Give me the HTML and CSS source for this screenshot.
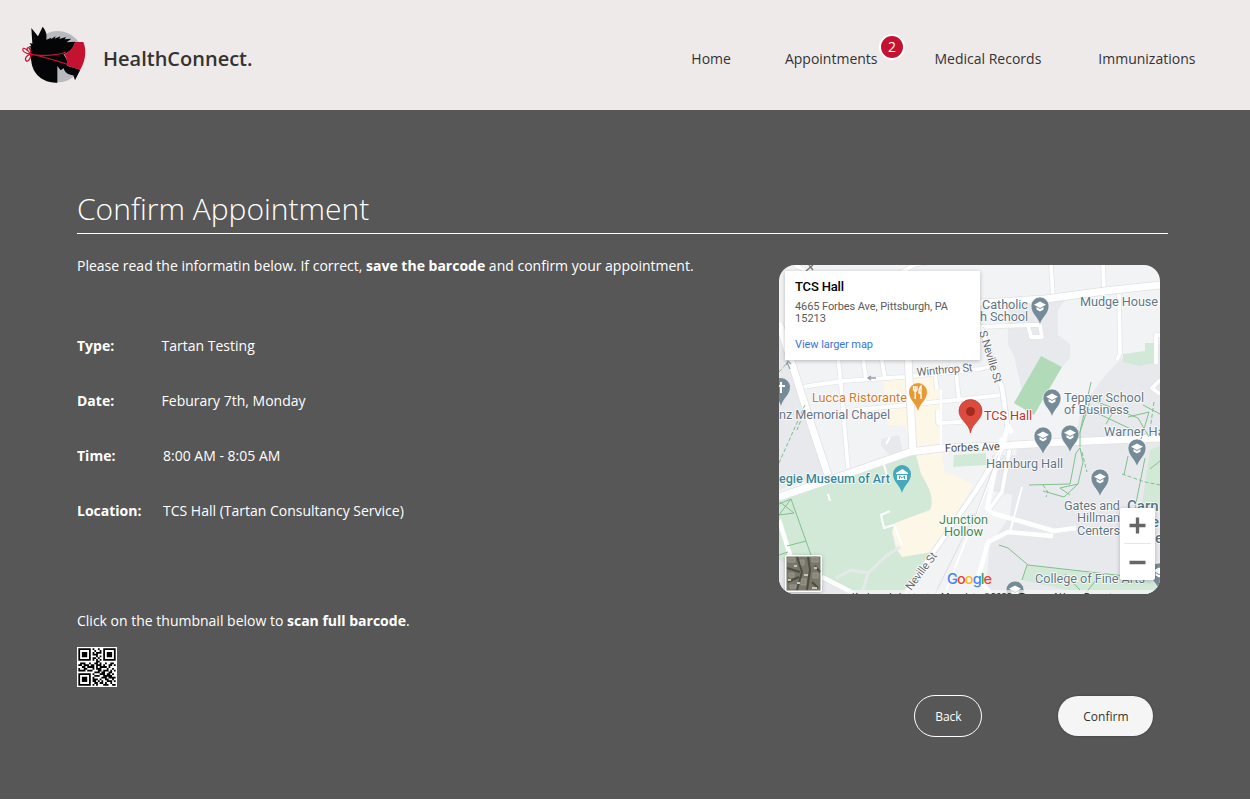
FILE: index.html
```html
<!DOCTYPE html>
<html lang="en">
<head>
<meta charset="utf-8">
<title>HealthConnect - Confirm Appointment</title>
<link rel="stylesheet" href="styles.css">
</head>
<body>
<header class="header">
  <a class="brand">
    <svg class="logo" viewBox="0 0 210 210" aria-hidden="true">
      <circle cx="113" cy="110" r="77" fill="#b9babf"/>
      <path d="M34 24 54 49 68 20C78 32 81 43 79 59L94 53 92 58 107 49 104 56 121 49 118 57 138 51 134 58 154 56 140 67 166 65C160 84 150 96 130 103C134 108 135 110 137 113C142 120 144 128 141 137L181 149 165 181 160 166C145 165 134 157 131 145L122 151 112 138V188C72 190 38 165 34 124L29 101 32 90 27 91 33 84 26 78 34 79 29 69 37 71Z" fill="#030506"/>
      <path d="M165 66H190C199 86 199 120 181 148C169 147 148 140 140 135C142 124 141 113 133 103C148 96 160 85 165 66Z" fill="#c41230"/>
      <path d="M33 103C55 108 110 108 138 96M33 103C70 108 120 125 182 146" fill="none" stroke="#c41230" stroke-width="4"/>
      <path d="M34 103C14 101 4 91 10 85C18 82 23 95 34 103C20 92 18 83 26 83C34 86 31 97 34 103C18 104 12 119 20 124C29 122 32 112 34 103" fill="none" stroke="#c41230" stroke-width="3.500"/>
    </svg>
    <span class="brand-name">HealthConnect.</span>
  </a>
  <nav class="nav">
    <a class="nav-home">Home</a>
    <a class="nav-appointments">Appointments<span class="badge">2</span></a>
    <a class="nav-records">Medical Records</a>
    <a class="nav-immunizations">Immunizations</a>
  </nav>
</header>
<main class="main">
  <h1 class="title">Confirm Appointment</h1>
  <div class="content">
    <section class="details">
      <p class="text">Please read the informatin below. If correct, <b>save the barcode</b> and confirm your appointment.</p>
      <dl class="fields">
        <div class="field"><dt>Type:</dt><dd>Tartan Testing</dd></div>
        <div class="field"><dt>Date:</dt><dd>Feburary 7th, Monday</dd></div>
        <div class="field field-wide"><dt>Time:</dt><dd>8:00 AM - 8:05 AM</dd></div>
        <div class="field field-wide"><dt>Location:</dt><dd>TCS Hall (Tartan Consultancy Service)</dd></div>
      </dl>
      <p class="text">Click on the thumbnail below to <b>scan full barcode</b>.</p>
      <svg class="qr" viewBox="-.75 -.75 22.5 22.5" aria-label="Barcode">
        <rect x="-.75" y="-.75" width="22.5" height="22.5" fill="#fff"/>
        <g fill="none" stroke="#000">
          <path d="M.5.5h6v6h-6zM14.5.5h6v6h-6zM.5 14.5h6v6h-6z"/>
          <path stroke-width="3" d="M2 3.5h3M16 3.5h3M2 17.5h3"/>
          <path d="M8 .5h1M11 .5h1M9 1.5h1M12 1.5h1M8 2.5h1M10 2.5h3M8 3.5h3M10 4.5h1M12 4.5h1M8 5.5h2M11 5.5h1M8 6.5h1M10 6.5h1M12 6.5h1M10 7.5h2M1 8.5h3M6 8.5h1M9 8.5h2M12 8.5h1M15 8.5h1M18 8.5h2M0 9.5h2M3 9.5h3M7 9.5h2M10 9.5h3M14 9.5h1M17 9.5h2M20 9.5h1M2 10.5h2M5 10.5h4M10 10.5h1M12 10.5h4M17 10.5h1M0 11.5h1M3 11.5h2M8 11.5h1M10 11.5h3M16 11.5h1M19 11.5h1M0 12.5h4M5 12.5h3M11 12.5h2M14 12.5h3M18 12.5h1M20 12.5h1M9 13.5h3M13 13.5h2M17 13.5h2M8 14.5h1M12 14.5h3M16 14.5h2M19 14.5h1M9 15.5h3M14 15.5h5M8 16.5h1M13 16.5h3M17 16.5h4M8 17.5h3M12 17.5h1M15 17.5h2M19 17.5h1M8 18.5h2M11 18.5h1M13 18.5h1M16 18.5h3M20 18.5h1M9 19.5h2M12 19.5h2M15 19.5h1M18 19.5h1M8 20.5h1M10 20.5h1M14 20.5h3M19 20.5h2"/>
        </g>
      </svg>
    </section>
    <aside class="side">
      <svg class="map" viewBox="779 265 381 329" role="img" aria-label="Map of TCS Hall">
        <defs>
          <g id="pin"><path d="M0 14C-2 6-9 3-9-5A9 9 0 0 1 9-5C9 3 2 6 0 14Z"/></g>
          <g id="school"><use href="#pin" fill="#768b98" stroke="#fff" stroke-width=".6"/><path d="M0-9.500 6-6.200 0-3-6-6.200ZM-3.500-4V-1.500L0 .5 3.500-1.500V-4L0-2Z" fill="#fff"/></g>
        </defs>
        <rect x="779" y="265" width="381" height="329" fill="#f1f3f5"/>
        <g fill="#e8e9ed">
          <path d="M1008 301 1065 300 1058 310V335L1070 344V358L1062 367 1041 356 1022 391 1014 356 1008 345Z"/>
          <path d="M1112 368 1122 358 1152 363 1160 342V594H985L990 545 1010 516 1017 446 1075 440 1081 410 1099 383Z"/>
          <path d="M779 330 827 474 779 490ZM779 560H820L850 594H779Z"/>
          <path d="M881 439 899 435 903 452 890 455 881 446ZM992 455H1017V496L993 491Z"/>
        </g>
        <path d="M883 380 932 375 941 389V425L942 455 945 472 960 478 974 485 934 551 903 560 890 525 925 510 914 455 905 426 888 425Z" fill="#fcf7e7"/>
        <path d="M779 500 910 455H916L921 474C931 490 934 500 930 510L895 523 892 532 896 549 902 557 932 552 905 594H850L779 560Z" fill="#d3e9d8"/>
        <path d="M954 455 986 453V465L953 467ZM1123 354 1145 351V343H1155V363L1139 366 1123 362ZM1027 565 1022 580 1085 594H1160V583L1120 576ZM1150 450 1160 446V510H1141Z" fill="#d3e9d8"/>
        <path d="M1041 356 1062 367 1034 415 1014 403Z" fill="#b1dab8"/>
        <g fill="none" stroke-linejoin="round">
          <path stroke="#dfe1e5" stroke-width="5" d="M802 387 842 381 903 377 980 369 995 365M855 410 908 405 965 399 1002 395M838 357 841 385 848 468M863 357 866 379M881 355 885 379M935 373 937 389M956 372 959 400M938 410V423L962 422M979 327 1028 325 1031 337H1042L1040 325H1028M1119 294 1120 353 1117 360M1051 265 1053 297M1103 265 1104 290M888 280 914 265 930 262M805 270 795 265M1010 447 1002 492 987 512M1160 335H1156V364M1160 380 1152 388 1160 394"/>
          <path stroke="#fff" stroke-width="3.800" d="M802 387 842 381 903 377 980 369 995 365M855 410 908 405 965 399 1002 395M838 357 841 385 848 468M863 357 866 379M881 355 885 379M935 373 937 389M956 372 959 400M938 410V423L962 422M979 327 1028 325 1031 337H1042L1040 325H1028M1119 294 1120 353 1117 360M1051 265 1053 297M1103 265 1104 290M888 280 914 265 930 262M805 270 795 265M1010 447 1002 492 987 512M1160 335H1156V364M1160 380 1152 388 1160 394"/>
          <path stroke="#dfe1e5" stroke-width="8.500" d="M779 497 847 474 910 452 942 448 998 446 1065 442 1160 438M779 323 812 427 828 475M908 357 913 452M980 303 1045 299 1105 291 1160 285"/>
          <path stroke="#dfe1e5" stroke-width="6" d="M981 328 1002 387 1008 430M1003 447 975 492 935 550 905 594"/>
          <path stroke="#fff" stroke-width="7" d="M779 497 847 474 910 452 942 448 998 446 1065 442 1160 438M779 323 812 427 828 475M908 357 913 452M980 303 1045 299 1105 291 1160 285"/>
          <path stroke="#fff" stroke-width="4.500" d="M981 328 1002 387 1008 430M1003 447 975 492 935 550 905 594M1002 438 987 508 992 513 1054 531 1076 528M1053 536 1008 532 988 542 978 578 991 594M779 520 791 558M822 577 855 594M1008 425 1003 445M1008 425 1012 433"/>
          <path stroke="#fff" stroke-width="2" d="M828 494 830 501M890 511 881 515 884 528 894 525 902 545M884 465 889 482M890 437 886 444M1022 487 1010 532M1004 445 960 555 945 594M941 390V447"/>
          <path stroke="#e6e9e9" stroke-width="3" d="M900 547 885 557 868 573 851 570 836 578M868 573 863 590"/>
          <path stroke="#dcdde0" d="M975 513 935 594M998 455 970 530"/>
          <path stroke="#7fc08c" d="M779 504 791 499 811 555M779 515 791 499M780 502 794 513 779 515M787 546 806 541M779 555 788 552M1080 447V432L1091 382M1085 397 1138 418 1149 437M1080 405 1135 431M1092 395 1078 438M1116 407 1106 424M1128 417 1149 412 1141 439M1160 414 1143 405M1029 485 1070 484 1076 453 1080 448 1083 462 1078 484 1064 497 1043 491M1078 484 1060 488 1070 495M999 545 1008 548 1028 565 1160 580M1128 456 1124 475M1145 458 1135 508M1150 469 1160 461M1022 580 1027 565M1065 574 1080 590M1100 575 1085 594"/>
          <path stroke="#7fc08c" stroke-dasharray="4 2" d="M779 463 805 405M779 372 788 362M805 410 797 430M1122 474 1145 482 1160 485M1154 402 1150 430M1082 452 1087 472M1043 485 1048 492 1046 497"/>
        </g>
        <g stroke="#99a0b4" stroke-width="1.300" fill="none"><path d="M876 378H868M871 376 868 378 871 380M790 369 787 362M786 365 788 361 791 364"/><path stroke="#777" d="M806 271 813 265M809 265 813 270"/></g>
        <use href="#school" x="1040" y="311"/><use href="#school" x="1052" y="403"/><use href="#school" x="1043" y="441"/><use href="#school" x="1070" y="439"/><use href="#school" x="1137" y="453"/><use href="#school" x="1100" y="483"/><use href="#school" x="1015" y="595"/><use href="#school" x="1159" y="577"/>
        <use href="#pin" x="781" y="392" fill="#768b98"/><path d="M781 382V393M777 386H785" stroke="#fff" stroke-width="2"/>
        <use href="#pin" x="918" y="397" fill="#e69a35"/><path d="M913.500 386V390Q915.500 393 917 390V386M915.200 386V399M921 399V386Q919 388 919 393H921" fill="none" stroke="#fff" stroke-width="1.300"/>
        <use href="#pin" x="902" y="479" fill="#45a9bd"/><path d="M896 473 902.500 469 908 473V474H896ZM897 475H907V480H897Z" fill="#fff"/><path d="M899.500 479V476L902 478 904.500 476V479" fill="none" stroke="#45a9bd"/>
        <path d="M970.500 433C969 423 959 420 959 411A11.500 11.500 0 0 1 982 411C982 420 972 423 970.500 433Z" fill="#dd4b3e" stroke="#b9382f" stroke-width=".7"/><circle cx="970.500" cy="411.500" r="4.500" fill="#a32a21"/>
        <g class="labels">
          <text x="982" y="309" textLength="46">Catholic</text><text x="980" y="321" textLength="48">h School</text>
          <text x="1080" y="306" textLength="78">Mudge House</text>
          <text x="1064" y="402" textLength="80">Tepper School</text><text x="1064" y="414" textLength="65">of Business</text>
          <text x="1104" y="436" textLength="67">Warner Hall</text>
          <text x="986" y="468" textLength="77">Hamburg Hall</text>
          <text x="1064" y="510" textLength="56">Gates and</text><text x="1077" y="522" textLength="43">Hillman</text><text x="1077" y="535" textLength="43">Centers</text>
          <text x="1035" y="583" textLength="110">College of Fine Arts</text>
          <text x="779" y="419" textLength="111">nz Memorial Chapel</text>
          <text class="orange" x="812" y="402" textLength="95">Lucca Ristorante</text>
          <text class="teal" x="779" y="483" textLength="111">egie Museum of Art</text>
          <text class="red" x="984" y="420" textLength="48">TCS Hall</text>
          <text class="green" x="939" y="524" textLength="49">Junction</text><text class="green" x="944" y="536" textLength="39">Hollow</text>
          <text class="campus" x="1127" y="511">Carn</text><text class="campus" x="1151" y="527">el</text><text class="campus" x="1155" y="543">e</text>
          <text class="road" x="917" y="376" textLength="56" transform="rotate(-5 917 376)">Winthrop St</text>
          <text class="road" x="979" y="332" textLength="54" transform="rotate(73 979 332)">S Neville St</text>
          <text class="road" x="911" y="591" textLength="44" transform="rotate(-53 911 591)">Neville St</text>
          <text class="road dark" x="945" y="452" textLength="55" transform="rotate(-2 945 452)">Forbes Ave</text>
        </g>
        <text class="google" x="947" y="584" textLength="45"><tspan fill="#4285f4">G</tspan><tspan fill="#ea4335">o</tspan><tspan fill="#fbbc05">o</tspan><tspan fill="#4285f4">g</tspan><tspan fill="#34a853">l</tspan><tspan fill="#ea4335">e</tspan></text>
        <rect x="848" y="590" width="312" height="4" fill="#f5f5f5" opacity=".7"/>
        <text class="legal" y="599.500"><tspan x="852">Keyboard shortcuts</tspan><tspan x="941">Map data ©2022</tspan><tspan x="1019">Terms of Use</tspan><tspan x="1084">Report</tspan></text>
        <g class="raised">
          <path d="M785 271H980V360H785Z" fill="#fff"/>
          <rect x="1120" y="508" width="35" height="72" rx="2" fill="#fff"/>
          <rect x="785" y="555" width="37" height="37" rx="2" fill="#fff"/>
        </g>
        <text class="place" x="795" y="291" textLength="49">TCS Hall</text>
        <text class="address" x="795" y="310" textLength="153">4665 Forbes Ave, Pittsburgh, PA</text><text class="address" x="795" y="322" textLength="31">15213</text>
        <text class="link" x="795" y="348" textLength="78">View larger map</text>
        <path d="M1124 543.500H1151" stroke="#e6e6e6"/><path d="M1129.500 525.500H1145.500M1137.500 517.500V533.500M1129.500 562.500H1145.500" stroke="#666" stroke-width="3.300"/>
        <rect x="786.500" y="556.500" width="34" height="34" fill="#77766a"/>
        <g class="aerial" fill="none"><path d="M788 558h7v4h-7zM800 560h4v5h-4zM812 557h6v5h-6zM789 573h5v4h-5zM801 579h5v6h-5zM813 573h5v5h-5zM790 585h6v3h-6z" stroke="#9b968b" fill="#8a8778"/><path d="M797 557 802 572 797 590M808 557 810 570 807 590M787 568 800 572M788 582 799 577M815 566 820 572M812 582 818 588" stroke="#4b4d40" stroke-width="2"/><path d="M794 566h3M804 575h4M814 568h3M788 580h3M812 588h5M797 583h3" stroke="#cac5b8" stroke-width="2"/></g>
      </svg>
      <div class="actions">
        <button class="button button-outline">Back</button>
        <button class="button button-solid">Confirm</button>
      </div>
    </aside>
  </div>
</main>
</body>
</html>
```
FILE: styles.css
```css
* { box-sizing: border-box; }
body { margin: 0; background: #fff; font-family: "Open Sans", sans-serif; font-size: 14px; line-height: 20px; }
.header { height: 110px; background: #eeeae9; color: #333; display: flex; justify-content: space-between; align-items: flex-start; padding: 20px 54.6px 0 20px; }
.brand { display: flex; align-items: flex-start; gap: 13px; }
.logo { width: 70px; height: 70px; }
.brand-name { font-size: 20px; font-weight: 600; line-height: 28px; padding-top: 25px; }
.nav { display: flex; gap: 57px; padding-top: 29px; }
.nav-home { margin-right: -3px; }
.nav-appointments { position: relative; }
.badge { position: absolute; left: 94px; top: -15px; width: 26px; height: 26px; border: 2px solid #fff; border-radius: 50%; background: #c41230; color: #fff; text-align: center; line-height: 22px; }
.main { height: 689px; background: #575757; color: #fff; padding: 76px 82px 0 77px; }
.title { margin: 0; height: 48px; border-bottom: 1px solid #fff; font-size: 30px; font-weight: 300; line-height: 45px; }
.content { display: flex; justify-content: space-between; }
.details { padding-top: 22px; }
.text { margin: 0; }
.fields { margin: 60px 0 90px; display: grid; gap: 35px; }
.field { display: grid; grid-template-columns: 84.6px auto; }
.field-wide { grid-template-columns: 86px auto; }
.field dt { font-weight: 700; }
.field dd { margin: 0; }
.qr { display: block; width: 40px; height: 40px; margin-top: 16px; }
.side { width: 381px; margin: 31px 8px 0 0; }
.map { display: block; width: 381px; height: 329px; border-radius: 16px; font-family: Roboto, sans-serif; }
.labels { font-size: 12.7px; fill: #5f7685; paint-order: stroke; stroke: #fff; stroke-width: 1.5px; stroke-linejoin: round; }
.orange { fill: #d07a2d; }
.teal { fill: #3a8799; font-weight: 500; }
.red { fill: #b9342b; }
.green { fill: #3d8b50; }
.campus { font-size: 15px; font-weight: 500; fill: #557587; }
.road { font-size: 11.3px; fill: #686c70; }
.dark { fill: #484b4e; }
.google { font-family: Inter, sans-serif; font-size: 14.5px; font-weight: 500; }
.legal { font-size: 9.5px; fill: #222; }
.raised { filter: drop-shadow(0 1px 2px rgb(0 0 0 / 25%)); }
.place { font-size: 13px; font-weight: 500; fill: #000; }
.address { font-size: 11px; fill: #5b5b5b; }
.link { font-size: 11px; fill: #3974df; }
.aerial { filter: blur(.6px); }
.actions { display: flex; justify-content: flex-end; gap: 76px; padding: 101px 6.6px 0 0; }
.button { font-family: inherit; font-size: 12px; font-weight: 500; border-radius: 21px; padding: 0; }
.button-outline { width: 68px; height: 42px; border: 1px solid #fff; background: transparent; color: #fff; }
.button-solid { width: 95px; height: 40px; margin-top: 1px; border: 0; background: #f5f5f5; color: #333; box-shadow: 0 0 2px rgb(0 0 0 / 45%); }
```
